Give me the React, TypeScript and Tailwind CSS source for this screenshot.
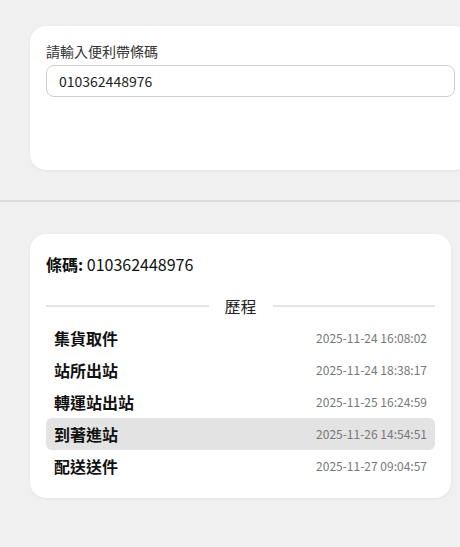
const EVENTS = [
  { name: "集貨取件", time: "2025-11-24 16:08:02" },
  { name: "站所出站", time: "2025-11-24 18:38:17" },
  { name: "轉運站出站", time: "2025-11-25 16:24:59" },
  { name: "到著進站", time: "2025-11-26 14:54:51", active: true },
  { name: "配送送件", time: "2025-11-27 09:04:57" },
];

export default function App() {
  return (
    <div className="min-h-[547px] w-[460px] overflow-hidden bg-[#f0f0f0] font-['Noto_Sans_CJK_TC','Noto_Sans',sans-serif] text-[#111]">
      {/* Search card */}
      <div className="pt-[26px] pl-[30px]">
        <div className="h-[144px] w-[441px] rounded-2xl bg-white px-4 pt-[15px] shadow-[0_1px_3px_rgba(0,0,0,0.06)]">
          <label className="block text-[14px] leading-[20px] text-[#333]">
            請輸入便利帶條碼
          </label>
          <input
            className="mt-[4px] h-8 w-[409px] rounded-lg border border-[#cfcfcf] bg-white px-3 font-['Noto_Sans_CJK_TC','Noto_Sans',sans-serif] text-[14px] text-[#222] outline-none"
            defaultValue="010362448976"
          />
        </div>
      </div>

      <div className="mt-[30px] h-[2px] w-full bg-[#dadada]" />

      {/* Result card */}
      <div className="px-[30px] pt-8 pr-[9px]">
        <div className="rounded-2xl bg-white px-4 pt-[18px] pb-[16px] shadow-[0_1px_3px_rgba(0,0,0,0.06)]">
          <p className="text-[16px] leading-6">
            <span className="font-bold">條碼:</span> 010362448976
          </p>

          <div className="mt-[18px] flex items-center gap-4">
            <div className="h-[2px] flex-1 bg-[#e4e4e4]" />
            <span className="text-[16px] leading-6 text-[#222]">歷程</span>
            <div className="h-[2px] flex-1 bg-[#e4e4e4]" />
          </div>

          <ul className="mt-1">
            {EVENTS.map((ev) => (
              <li
                key={ev.name}
                className={`flex h-8 items-center justify-between rounded-md px-2 ${
                  ev.active ? "bg-[#e3e3e3]" : ""
                }`}
              >
                <span className="text-[16px] font-bold text-[#111]">{ev.name}</span>
                <span className="text-[12px] text-[#777]">{ev.time}</span>
              </li>
            ))}
          </ul>
        </div>
      </div>
    </div>
  );
}
